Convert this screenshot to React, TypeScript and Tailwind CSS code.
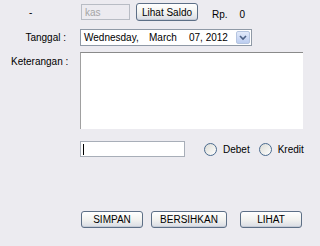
import React from "react";

function XPButton({ children, className = "" }: { children: React.ReactNode; className?: string }) {
  return (
    <div
      className={
        "flex items-center justify-center whitespace-nowrap rounded-[3px] border border-[#5d6f86] bg-gradient-to-b from-[#ffffff] via-[#f3f3f0] to-[#d9dce4] text-[10px] text-black shadow-[inset_0_-1px_0_#c5cbd6] " +
        className
      }
    >
      {children}
    </div>
  );
}

function Radio({ label }: { label: string }) {
  return (
    <div className="flex items-center gap-[6px]">
      <div className="h-[13px] w-[13px] rounded-full border border-[#4a6a8e] bg-gradient-to-br from-[#dcdcd6] to-[#ffffff]" />
      <span className="text-[10px] text-black">{label}</span>
    </div>
  );
}

export default function App() {
  return (
    <div
      className="relative h-[246px] w-[320px] overflow-hidden whitespace-nowrap bg-[#ecebf0] text-[10px] text-black"
      style={{ fontFamily: '"Liberation Sans", Arial, sans-serif' }}
    >
      <div className="flex flex-col">
        {/* Row 1 */}
        <div className="mt-[3px] flex h-[18px] items-center">
          <div className="w-[81px] pl-[29px]">-</div>
          <div className="flex h-[16px] w-[49px] items-center border border-[#b8bcc4] bg-[#ecebf0] pl-[3px] text-[#a5a5a5]">kas</div>
          <XPButton className="ml-[6px] h-[18px] w-[62px]">Lihat Saldo</XPButton>
          <div className="ml-[14px] mt-[5px]">Rp.</div>
          <div className="ml-[12px] mt-[5px]">0</div>
        </div>
        {/* Row 2 */}
        <div className="mt-[8px] flex h-[17px] items-center">
          <div className="w-[80px] pr-[14px] text-right">Tanggal :</div>
          <div className="flex h-[17px] w-[172px] items-center border border-[#8f99a6] bg-white pl-[3px]">
            <span className="w-[65px]">Wednesday,</span>
            <span className="w-[40px]">March</span>
            <span>07, 2012</span>
            <div className="ml-auto mr-[1px] flex h-[13px] w-[14px] items-center justify-center rounded-[2px] border border-[#b5c5e0] bg-gradient-to-b from-[#e2eafa] to-[#bccdf0]">
              <svg width="8" height="6" viewBox="0 0 8 6">
                <path d="M1 1 L4 4 L7 1" stroke="#4d6185" strokeWidth="1.6" fill="none" />
              </svg>
            </div>
          </div>
        </div>
        {/* Row 3 */}
        <div className="mt-[6px] flex">
          <div className="w-[80px] pl-[11px] pt-[2px]">Keterangan :</div>
          <div className="h-[77px] w-[223px] border-l border-t border-l-[#a0a0a0] border-t-[#8a8a8a] bg-white" />
        </div>
        {/* Row 4 */}
        <div className="mt-[12px] flex items-center">
          <div className="w-[80px]" />
          <div className="flex h-[16px] w-[105px] items-center border border-[#a8aeb8] bg-white pl-[2px]">
            <div className="h-[11px] w-[1px] bg-black" />
          </div>
          <div className="ml-[19px]">
            <Radio label="Debet" />
          </div>
          <div className="ml-[9px]">
            <Radio label="Kredit" />
          </div>
        </div>
        {/* Row 5 */}
        <div className="mt-[54px] flex items-center">
          <div className="w-[81px]" />
          <XPButton className="h-[17px] w-[62px]">SIMPAN</XPButton>
          <XPButton className="ml-[8px] h-[17px] w-[76px]">BERSIHKAN</XPButton>
          <XPButton className="ml-[13px] h-[17px] w-[62px]">LIHAT</XPButton>
        </div>
      </div>
    </div>
  );
}
